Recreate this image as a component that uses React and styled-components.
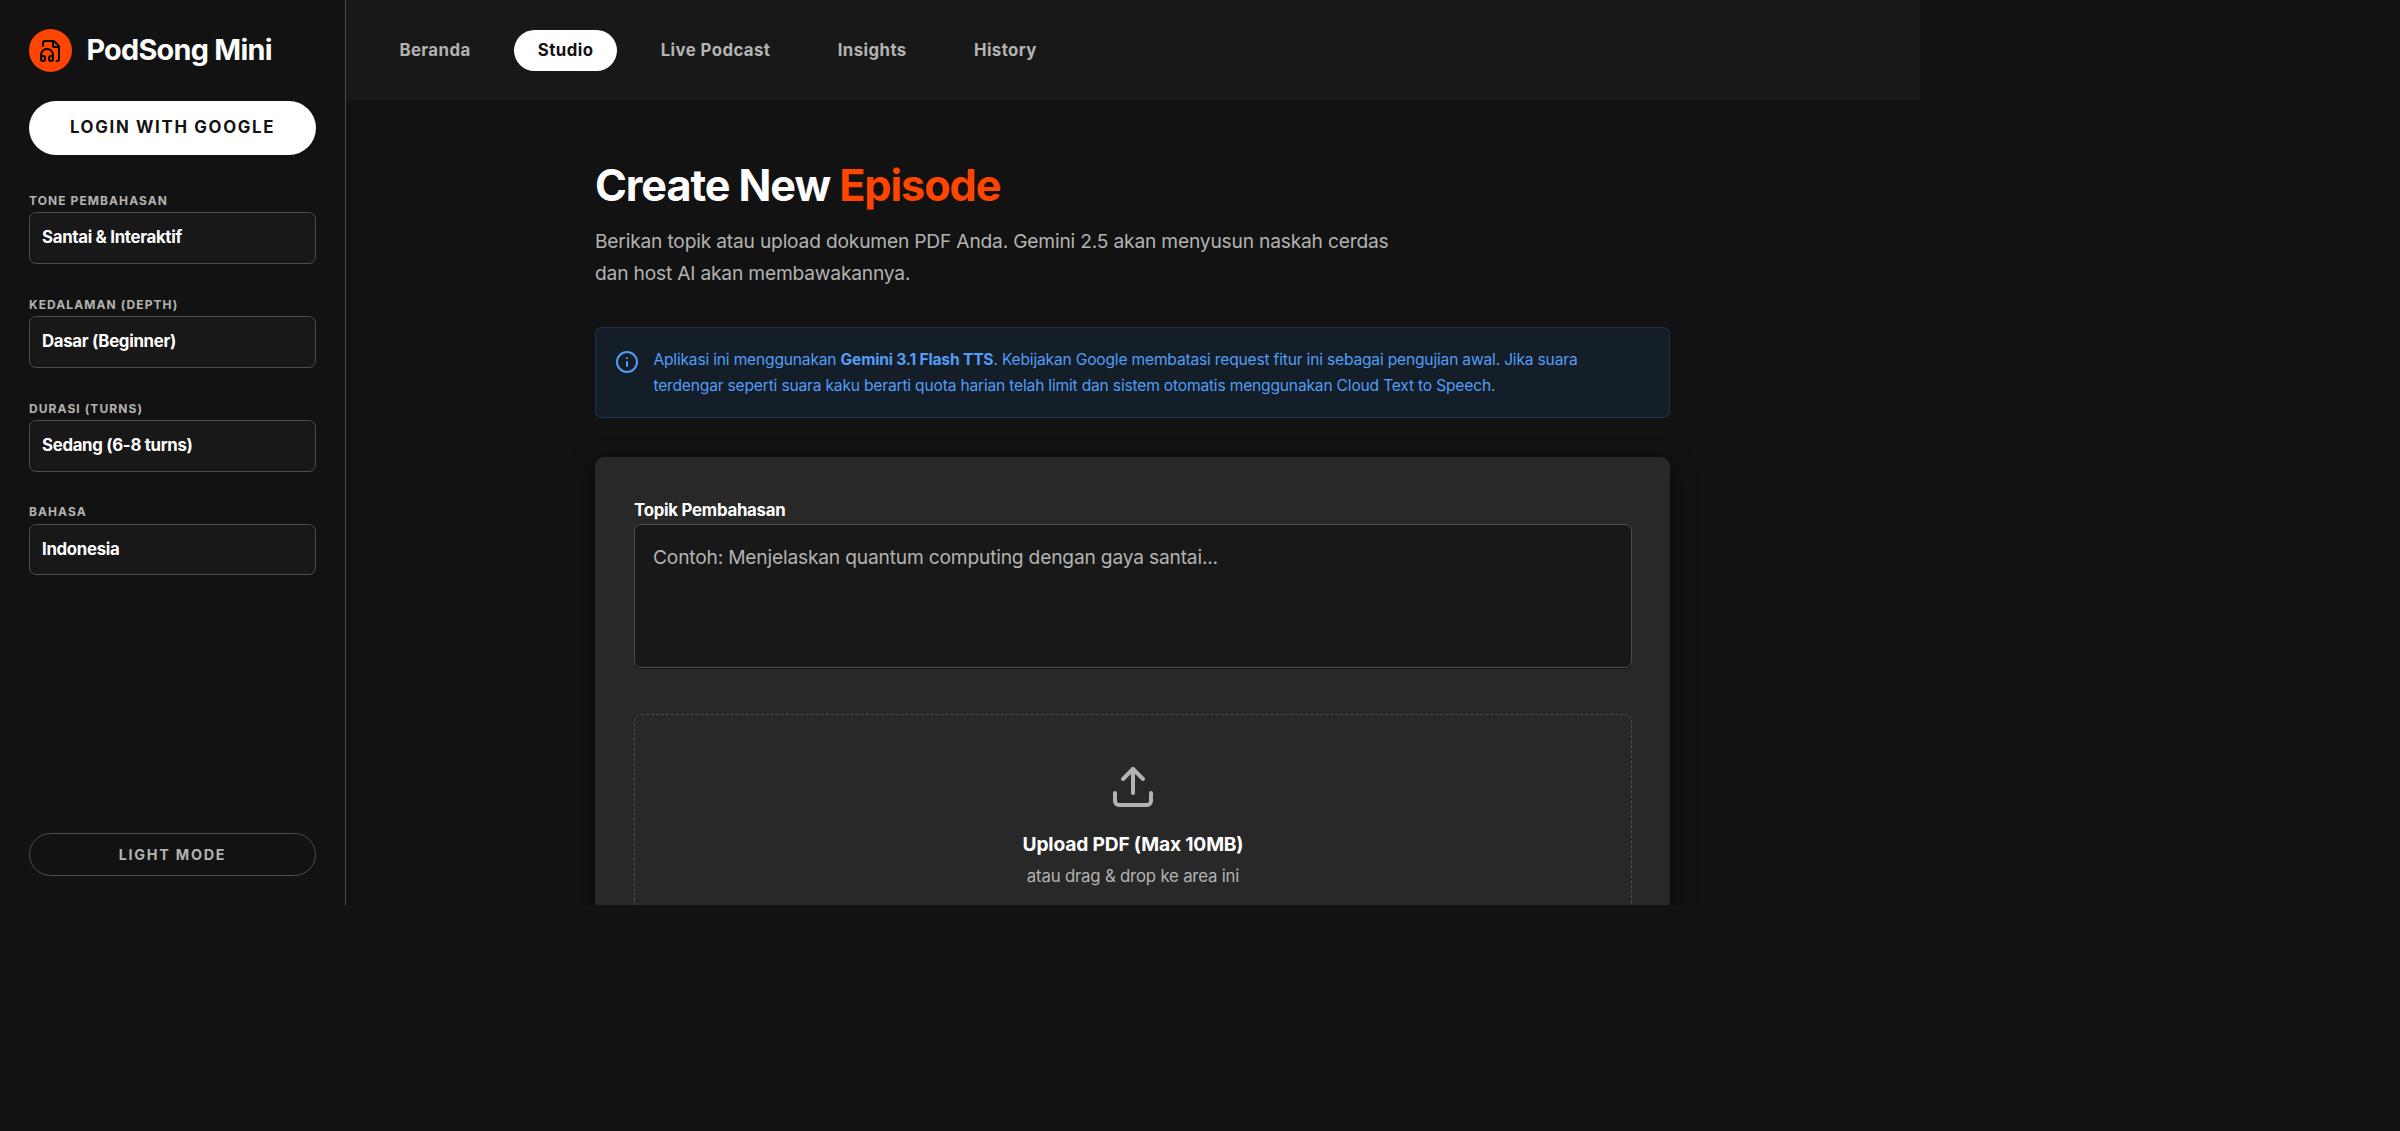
// App.jsx
import React, { useState } from "react";
import styled, { createGlobalStyle } from "styled-components";
import { FileHeadphone, Info, Upload } from "lucide-react";

const GlobalStyle = createGlobalStyle`
  * {
    box-sizing: border-box;
  }
  body {
    margin: 0;
    background: #121212;
    font-family: Inter, sans-serif;
    overflow: hidden;
  }
  button,
  textarea {
    font-family: inherit;
    margin: 0;
  }
`;

/* ------- Shell ------- */
const Shell = styled.div`
  display: flex;
  width: 1920px;
  height: 905px;
  overflow: hidden;
  background: #121212;
  color: #ffffff;
`;

/* ------- Sidebar ------- */
const Sidebar = styled.aside`
  flex: 0 0 346px;
  display: flex;
  flex-direction: column;
  padding: 29px;
  border-right: 1px solid #4d4d4d;
`;
const Brand = styled.div`
  display: flex;
  align-items: center;
  gap: 14.4px;
  height: 43px;
  margin-bottom: 29px;
`;
const BrandMark = styled.div`
  width: 43px;
  height: 43px;
  border-radius: 50%;
  background: #ff4500;
  color: #000000;
  display: flex;
  align-items: center;
  justify-content: center;
`;
const BrandName = styled.h1`
  margin: 0;
  padding-bottom: 2px;
  font-size: 28.8px;
  font-weight: 700;
  letter-spacing: -0.025em;
`;
const LoginButton = styled.button`
  height: 54px;
  flex: none;
  padding: 0 6px 2px;
  border: none;
  border-radius: 27px;
  background: #ffffff;
  color: #121212;
  font-size: 16.8px;
  font-weight: 700;
  letter-spacing: 0.1em;
  text-transform: uppercase;
  margin-bottom: 38px;
`;
const Settings = styled.div`
  display: flex;
  flex-direction: column;
  gap: 32.8px;
  flex: 1;
`;
const Setting = styled.div`
  display: flex;
  flex-direction: column;
`;
const SettingLabel = styled.span`
  height: 19.4px;
  line-height: 16.6px;
  color: #b3b3b3;
  font-size: 12px;
  font-weight: 700;
  letter-spacing: 0.09em;
  text-transform: uppercase;
`;
const SettingValue = styled.button`
  height: 51.6px;
  padding: 0 12px 1.4px;
  border: 1px solid #4d4d4d;
  border-radius: 7px;
  background: #181818;
  color: #ffffff;
  font-size: 16.8px;
  font-weight: 700;
  letter-spacing: -0.3px;
  text-align: left;
`;
const ModeButton = styled.button`
  height: 43px;
  border: 1px solid #4d4d4d;
  border-radius: 22px;
  background: transparent;
  color: #b3b3b3;
  font-size: 14.4px;
  font-weight: 700;
  letter-spacing: 0.12em;
  text-transform: uppercase;
`;

/* ------- Top navigation ------- */
const Main = styled.main`
  flex: 1;
  min-width: 0;
  display: flex;
  flex-direction: column;
`;
const TopNav = styled.nav`
  flex: 0 0 100px;
  display: flex;
  align-items: center;
  gap: 19.3px;
  padding: 0 29.4px;
  background: #181818;
`;
const NavItem = styled.button`
  height: 41px;
  padding: 0 24px;
  border: none;
  border-radius: 21px;
  background: ${(p) => (p.$active ? "#ffffff" : "transparent")};
  color: ${(p) => (p.$active ? "#121212" : "#b3b3b3")};
  font-size: 16.8px;
  font-weight: 700;
  letter-spacing: 0.025em;
`;

/* ------- Studio ------- */
const Content = styled.section`
  flex: 1;
  min-height: 0;
  overflow: hidden;
  display: flex;
  justify-content: center;
`;
const Column = styled.div`
  width: 1075px;
  padding-top: 58px;
  margin-right: 1px;
`;
const Heading = styled.h2`
  margin: 0;
  font-size: 43.2px;
  line-height: 54px;
  font-weight: 700;
  letter-spacing: -0.025em;
`;
const Accent = styled.span`
  color: #ff4500;
`;
const Lead = styled.p`
  margin: 13px 0 38px;
  max-width: 806px;
  color: #b3b3b3;
  font-size: 19.2px;
  line-height: 32px;
  letter-spacing: -0.19px;
`;
const Notice = styled.div`
  display: flex;
  gap: 14.4px;
  height: 91px;
  padding: 19px;
  border: 1px solid rgba(59, 130, 246, 0.2);
  border-radius: 7px;
  background: #141e29;
  color: #539df5;

  svg {
    flex: none;
    margin-top: 3px;
  }
`;
const NoticeText = styled.p`
  margin: 0;
  max-width: 980px;
  font-size: 15.6px;
  line-height: 26px;
  letter-spacing: -0.19px;
`;
const Card = styled.div`
  margin-top: 39px;
  height: 600px;
  padding: 39px 38px 39px 39px;
  border-radius: 9.6px;
  background: #282828;
  box-shadow: 0 8px 24px rgba(0, 0, 0, 0.5);
`;
const FieldLabel = styled.label`
  display: block;
  height: 28px;
  line-height: 28px;
  font-size: 16.8px;
  font-weight: 700;
  letter-spacing: -0.24px;
`;
const TopicInput = styled.textarea`
  display: block;
  width: 100%;
  height: 144px;
  padding: 18px;
  border: 1px solid #4d4d4d;
  border-radius: 7px;
  outline: none;
  resize: none;
  background: #181818;
  color: #ffffff;
  box-shadow: 0 1px 0 #121212;
  font-size: 19.2px;
  line-height: 29px;
  letter-spacing: -0.19px;

  &::placeholder {
    color: #b3b3b3;
  }
`;
const DropZone = styled.div`
  margin-top: 46px;
  height: 300px;
  padding-top: 48px;
  border: 1px dashed #4d4d4d;
  border-radius: 7px;
  display: flex;
  flex-direction: column;
  align-items: center;
  color: #b3b3b3;
`;
const DropTitle = styled.span`
  margin-top: 19px;
  color: #ffffff;
  font-size: 19.2px;
  line-height: 29px;
  font-weight: 700;
  letter-spacing: -0.17px;
`;
const DropHint = styled.span`
  margin-top: 5px;
  font-size: 16.8px;
  line-height: 25px;
  letter-spacing: -0.2px;
`;

const settings = [
  { label: "Tone Pembahasan", value: "Santai & Interaktif" },
  { label: "Kedalaman (Depth)", value: "Dasar (Beginner)" },
  { label: "Durasi (Turns)", value: "Sedang (6-8 turns)" },
  { label: "Bahasa", value: "Indonesia" },
];

const tabs = ["Beranda", "Studio", "Live Podcast", "Insights", "History"];

function App() {
  const [activeTab, setActiveTab] = useState("Studio");

  return (
    <Shell>
      <GlobalStyle />
      <Sidebar>
        <Brand>
          <BrandMark>
            <FileHeadphone size={24} />
          </BrandMark>
          <BrandName>PodSong Mini</BrandName>
        </Brand>
        <LoginButton type="button">Login with Google</LoginButton>
        <Settings>
          {settings.map((s) => (
            <Setting key={s.label}>
              <SettingLabel>{s.label}</SettingLabel>
              <SettingValue type="button">{s.value}</SettingValue>
            </Setting>
          ))}
        </Settings>
        <ModeButton type="button">Light Mode</ModeButton>
      </Sidebar>

      <Main>
        <TopNav>
          {tabs.map((tab) => (
            <NavItem
              key={tab}
              type="button"
              $active={tab === activeTab}
              onClick={() => setActiveTab(tab)}
            >
              {tab}
            </NavItem>
          ))}
        </TopNav>

        <Content>
          <Column>
            <Heading>
              Create New <Accent>Episode</Accent>
            </Heading>
            <Lead>
              Berikan topik atau upload dokumen PDF Anda. Gemini 2.5 akan
              menyusun naskah cerdas dan host AI akan membawakannya.
            </Lead>

            <Notice>
              <Info size={24} />
              <NoticeText>
                Aplikasi ini menggunakan <strong>Gemini 3.1 Flash TTS</strong>.
                Kebijakan Google membatasi request fitur ini sebagai pengujian
                awal. Jika suara terdengar seperti suara kaku berarti quota
                harian telah limit dan sistem otomatis menggunakan Cloud Text to
                Speech.
              </NoticeText>
            </Notice>

            <Card>
              <FieldLabel htmlFor="topic">Topik Pembahasan</FieldLabel>
              <TopicInput
                id="topic"
                placeholder="Contoh: Menjelaskan quantum computing dengan gaya santai..."
              />
              <DropZone>
                <Upload size={48} />
                <DropTitle>Upload PDF (Max 10MB)</DropTitle>
                <DropHint>atau drag &amp; drop ke area ini</DropHint>
              </DropZone>
            </Card>
          </Column>
        </Content>
      </Main>
    </Shell>
  );
}

export default App;
